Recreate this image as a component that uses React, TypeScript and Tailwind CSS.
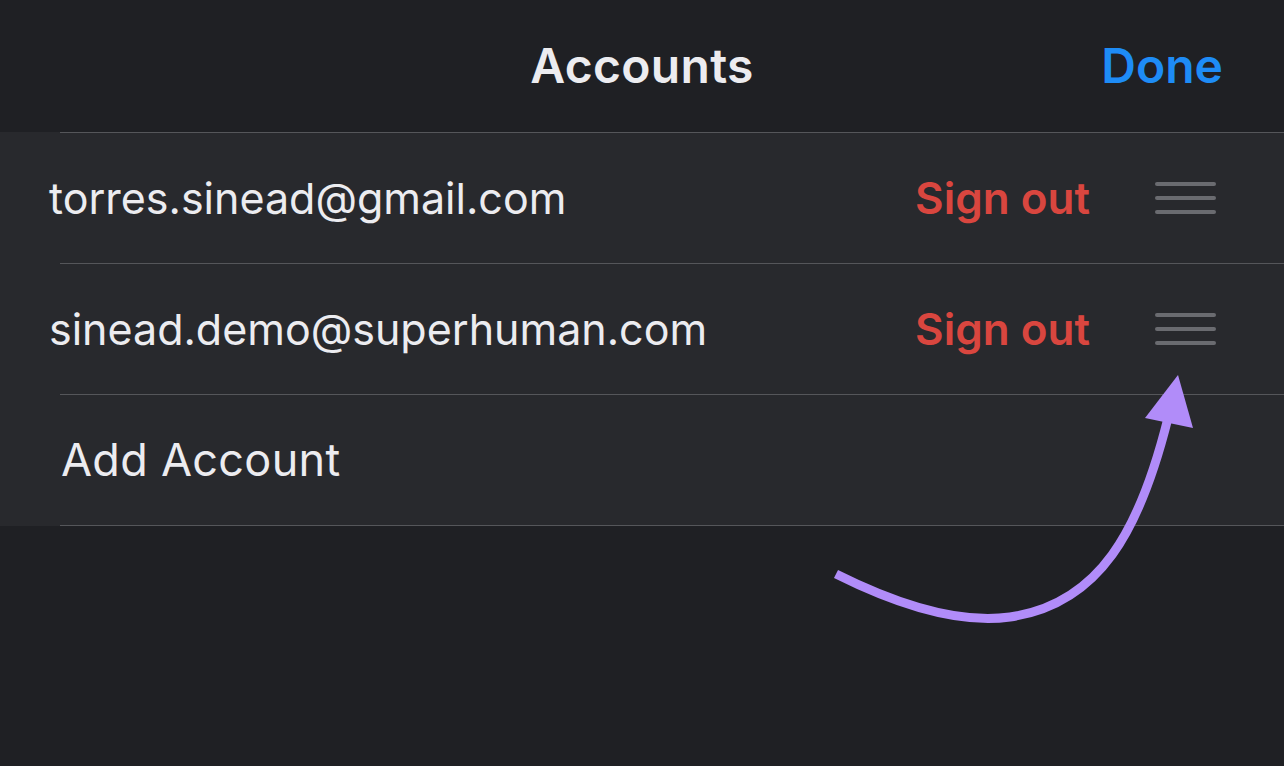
import React from 'react'

// Accounts sheet (dark iOS style) with a reorder hint arrow.

const ACCOUNTS = ['torres.sinead@gmail.com', 'sinead.demo@superhuman.com']

function Grip() {
  return (
    <div className="flex w-[61px] flex-col gap-[10px]">
      <div className="h-[4px] rounded-full bg-[#6a6b70]" />
      <div className="h-[4px] rounded-full bg-[#6a6b70]" />
      <div className="h-[4px] rounded-full bg-[#6a6b70]" />
    </div>
  )
}

function Row({ email }: { email: string }) {
  return (
    <div className="flex h-[130px] items-center">
      <div className="flex-1 pl-[49px] text-[43px] text-[#ececf0]">{email}</div>
      <div className="text-[44px] font-semibold text-[#d9463f]">Sign out</div>
      <div className="ml-[65px] mr-[68px]">
        <Grip />
      </div>
    </div>
  )
}

export default function App() {
  return (
    <div
      className="relative h-[766px] w-[1284px] overflow-hidden bg-[#1f2024]"
      style={{ fontFamily: 'Inter, "Noto Sans", sans-serif' }}
    >
      <header className="relative flex h-[132px] items-center justify-center">
        <h1 className="text-[48px] font-semibold tracking-[0.3px] text-[#ececf0]">Accounts</h1>
        <button className="absolute right-[61px] text-[48px] font-semibold text-[#1e8cf6]">Done</button>
      </header>

      <div className="bg-[#28292d]">
        {ACCOUNTS.map((a) => (
          <div key={a} className="ml-[60px] border-t border-[#55565a]">
            <div className="-ml-[60px]">
              <Row email={a} />
            </div>
          </div>
        ))}
        <div className="ml-[60px] flex h-[132px] items-center border-y border-[#55565a]">
          <span className="pl-[1px] text-[45px] tracking-[0.3px] text-[#ececf0]">Add Account</span>
        </div>
      </div>

      <svg className="absolute left-0 top-0" width="1284" height="766" viewBox="0 0 1284 766">
        <path
          d="M836 574 C 900 606, 960 624, 1010 617 C 1100 604, 1140 530, 1168 418"
          fill="none"
          stroke="#b18cf9"
          strokeWidth="9"
        />
        <polygon points="1178,375 1145,418 1193,428" fill="#b18cf9" />
      </svg>
    </div>
  )
}
